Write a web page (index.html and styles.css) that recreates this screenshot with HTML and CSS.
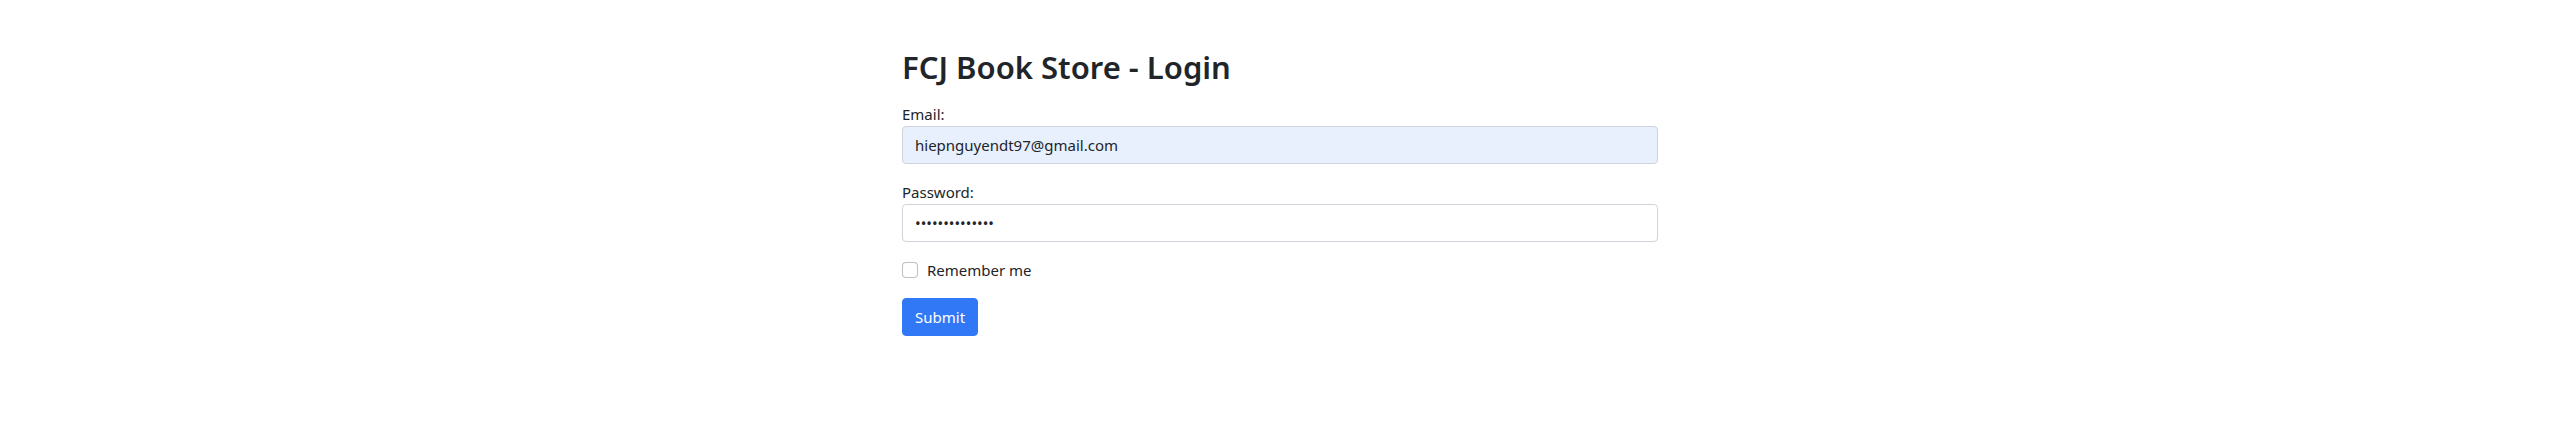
FILE: index.html
```html
<!DOCTYPE html>
<html lang="en">
<head>
<meta charset="utf-8">
<title>FCJ Book Store - Login</title>
<link rel="stylesheet" href="styles.css">
</head>
<body>
<main class="container">
  <h2 class="title">FCJ Book Store - Login</h2>
  <form class="login-form">
    <div class="field">
      <label class="field-label" for="email">Email:</label>
      <input class="control control-autofill" type="email" id="email" value="hiepnguyendt97@gmail.com">
    </div>
    <div class="field">
      <label class="field-label" for="pwd">Password:</label>
      <input class="control" type="password" id="pwd" value="12345678901234">
    </div>
    <div class="check">
      <input class="check-input" type="checkbox" id="remember">
      <label class="check-label" for="remember">Remember me</label>
    </div>
    <button class="btn-primary" type="button">Submit</button>
  </form>
</main>
</body>
</html>
```
FILE: styles.css
```css
* { box-sizing: border-box; }
html, body { margin: 0; padding: 0; background: #fff; }
body {
  font-family: "Noto Sans", "Open Sans", sans-serif;
  font-size: 16px;
  line-height: 1.5;
  color: #212529;
}
.container {
  width: 756px;
  margin: 48px auto 0;
}
.title {
  margin: 0 0 16px;
  font-size: 31px;
  font-weight: 600;
  line-height: 38px;
}
.login-form { margin: 0; }
.field { margin-bottom: 16px; }
.field-label {
  display: block;
  font-size: 15px;
  line-height: 24px;
}
.control {
  display: block;
  width: 100%;
  height: 38px;
  padding: 6px 12px;
  font-family: inherit;
  font-size: 15px;
  line-height: 24px;
  color: #212529;
  background: #fff;
  border: 1px solid #ced4da;
  border-radius: 4px;
  outline: none;
}
.control-autofill { background: #e8f0fe; }
.check {
  display: flex;
  align-items: center;
  min-height: 24px;
  margin-bottom: 16px;
}
.check-input {
  appearance: none;
  -webkit-appearance: none;
  width: 16px;
  height: 16px;
  margin: 0 9px 0 0;
  border: 1px solid rgba(0,0,0,0.25);
  border-radius: 4px;
  background: #fff;
}
.check-label {
  font-size: 15px;
  line-height: 24px;
}
.btn-primary {
  display: inline-block;
  height: 38px;
  padding: 6px 12px;
  font-family: inherit;
  font-size: 15px;
  line-height: 24px;
  color: #fff;
  background: #3178f6;
  border: 1px solid #3178f6;
  border-radius: 4px;
}
```
